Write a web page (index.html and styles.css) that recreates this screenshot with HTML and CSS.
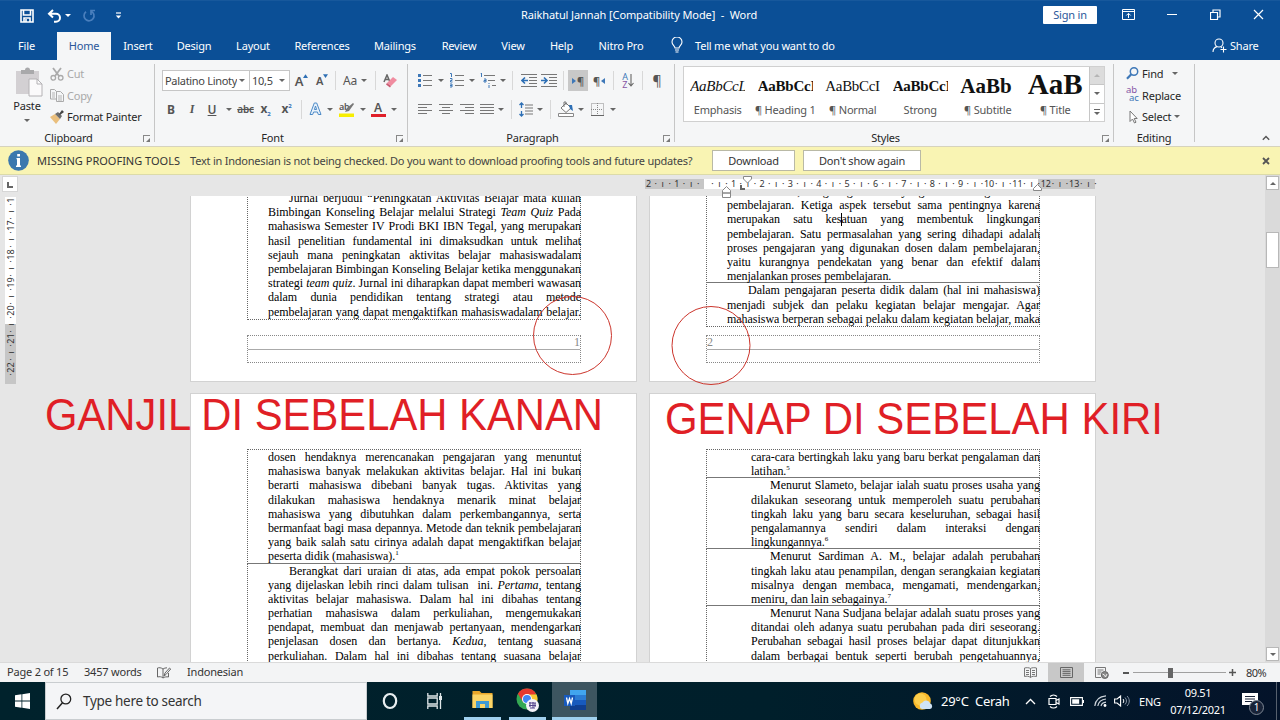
FILE: index.html
```html
<!DOCTYPE html>
<html lang="id">
<head>
    <meta charset="UTF-8">
    <meta name="viewport" content="width=device-width, initial-scale=1.0">
    <title>Raikhatul Jannah [Compatibility Mode] - Word</title>
    <link rel="stylesheet" href="styles.css">
</head>
<body>
    <header class="titlebar">
        <div class="quick-access">
            <svg width="14" height="14" viewBox="0 0 14 14"><path d="M1 1h12v12H1zM3.5 1v5h7V1M4 13V9h6v4M6 10v3" fill="none" stroke="#fff" stroke-width="1.6"/></svg>
            <svg class="undo" width="15" height="14" viewBox="0 0 15 14"><path d="M6 1L2 4.700L6 8.500M2 4.700H9a4 4 0 0 1 0 8H7" fill="none" stroke="#fff" stroke-width="2"/></svg>
            <i class="caret white"></i>
            <svg class="redo" width="14" height="14" viewBox="0 0 14 14"><path d="M9 2.200A5 5 0 1 1 4 2.800M9 6V1.500h4" fill="none" stroke="#4a7fbd" stroke-width="1.700"/></svg>
            <svg class="customize" width="7" height="8" viewBox="0 0 7 8"><path d="M1 1h5" stroke="#fff" stroke-width="1.200"/><path d="M.8 3.500h5.400L3.500 6.600z" fill="#fff"/></svg>
        </div>
        <h1 class="doc-title">Raikhatul Jannah [Compatibility Mode] &nbsp;-&nbsp; Word</h1>
        <div class="window-buttons">
            <button class="sign-in">Sign in</button>
            <svg width="13" height="11" viewBox="0 0 13 11"><path d="M.5.5h12v10H.5zM.5 2.500h12M6.500 9V4.500M4.300 6.500l2.200-2.200 2.200 2.200" fill="none" stroke="#fff"/></svg>
            <svg width="10" height="11" viewBox="0 0 10 11"><path d="M0 5.500h10" stroke="#fff"/></svg>
            <svg width="11" height="11" viewBox="0 0 11 11"><path d="M.5 3.500h7v7h-7zM3 3V1h7v7H8" fill="none" stroke="#fff" stroke-width="1.200"/></svg>
            <svg width="11" height="11" viewBox="0 0 11 11"><path d="M1 1l9 9M10 1l-9 9" stroke="#fff" stroke-width="1.200"/></svg>
        </div>
    </header>

    <nav class="tabs">
        <a class="tab file">File</a>
        <a class="tab active">Home</a>
        <a class="tab">Insert</a>
        <a class="tab">Design</a>
        <a class="tab">Layout</a>
        <a class="tab">References</a>
        <a class="tab">Mailings</a>
        <a class="tab">Review</a>
        <a class="tab">View</a>
        <a class="tab">Help</a>
        <a class="tab">Nitro Pro</a>
        <div class="tell-me">
            <svg width="12" height="16" viewBox="0 0 12 16"><path d="M4 11c0-2-3-3-3-6a5 5 0 0 1 10 0c0 3-3 4-3 6zM4 13h4M4.500 15h3" fill="none" stroke="#fff" stroke-width="1.100"/></svg>
            <span>Tell me what you want to do</span>
        </div>
        <div class="share">
            <svg width="15" height="15" viewBox="0 0 15 15"><circle cx="7" cy="5" r="4" fill="none" stroke="#fff" stroke-width="1.100"/><path d="M1 14c0-3 2-4.800 4-5.400M9 9l1 .8M11.500 8.500v6M8.500 11.500h6" fill="none" stroke="#fff" stroke-width="1.100"/></svg>
            <span>Share</span>
        </div>
    </nav>

    <section class="ribbon">
        <div class="group clipboard">
            <div class="group-body">
                <div class="paste">
                    <svg width="28" height="30" viewBox="0 0 28 30"><path d="M1 4h23v23H1z" fill="#d3d0d3"/><path d="M6 3h4a2.500 2.500 0 0 1 5 0h4v4H6z" fill="#a9a9ab"/><path d="M14 12h8l5 5v12H14z" fill="#fbfafb" stroke="#b4b2b5"/><path d="M22 12v5h5" fill="none" stroke="#b4b2b5"/></svg>
                    <span>Paste</span>
                    <i class="caret"></i>
                </div>
                <ul class="commands">
                    <li class="off"><svg width="14" height="14" viewBox="0 0 14 14"><path d="M3 1l6 8M11 1L5 9" stroke="#aaa" stroke-width="1.800"/><circle cx="3.300" cy="10.800" r="2.300" fill="none" stroke="#aaa" stroke-width="1.300"/><circle cx="10.700" cy="10.800" r="2.300" fill="none" stroke="#aaa" stroke-width="1.300"/></svg>Cut</li>
                    <li class="off"><svg width="14" height="14" viewBox="0 0 14 14"><path d="M.5 1.500h4l2 2V11h-6zM6.500 3.500h4l3 3v7h-7z" fill="#f5f6f7" stroke="#aaa"/><path d="M2 5h3M2 7h3M2 9h3M8 8h4M8 10h4M8 12h4" stroke="#b5b5b5"/></svg>Copy</li>
                    <li><svg width="14" height="14" viewBox="0 0 14 14"><path d="M0 7l5-3 5 5-4 5z" fill="#eabf7d"/><path d="M5 4l3-2 4 4-2 3z" fill="#6d6d6d"/><path d="M9 4l3-4 2 2-4 3z" fill="#444"/></svg>Format Painter</li>
                </ul>
            </div>
            <footer class="group-label"><span>Clipboard</span><i class="launcher"></i></footer>
        </div>

        <div class="group font">
            <div class="group-body">
                <div class="row font-top">
                    <div class="combo"><span class="combo-text">Palatino Linoty</span><i class="caret"></i></div>
                    <div class="combo size"><span class="combo-text">10,5</span><i class="caret"></i></div>
                    <span class="grow">A<svg width="5" height="4" viewBox="0 0 4 3"><path d="M0 3l2-3 2 3z" fill="#2d6fb5"/></svg></span>
                    <span class="grow small">A<svg width="5" height="4" viewBox="0 0 4 3"><path d="M0 0l2 3 2-3z" fill="#2d6fb5"/></svg></span>
                    <i class="sep"></i>
                    <span class="glyph-aa">Aa</span>
                    <i class="caret"></i>
                    <i class="sep"></i>
                    <svg width="14" height="14" viewBox="0 0 14 14"><path d="M1 8L4 1l3 7M2 5.500h4" fill="none" stroke="#666" stroke-width="1.500"/><path d="M4 9l6-6 4 3-6 6z" fill="#f08ca0"/><path d="M4 9l4 3-1 1.500-4-3z" fill="#c95a72"/></svg>
                </div>
                <div class="row font-bottom">
                    <b>B</b>
                    <span class="italic">I</span>
                    <span class="underline">U</span>
                    <i class="caret"></i>
                    <span class="strike">abc</span>
                    <span class="script">x<sub>2</sub></span>
                    <span class="script">x<sup>2</sup></span>
                    <i class="sep"></i>
                    <svg width="13" height="14" viewBox="0 0 13 14"><path d="M1 12.500L5.300 1h2.400L12 12.500H9.300L8.400 10H4.600L3.700 12.500zM5.400 7.500h2.200L6.500 4z" fill="#e9f2fb" stroke="#4c8ac7"/></svg>
                    <i class="caret"></i>
                    <span class="highlight">ab<svg width="15" height="15" viewBox="0 0 15 15"><path d="M0 11.500h15V15H0z" fill="#f7ee00"/><path d="M6 10l2-4 6-5 1 1-5 7z" fill="#777"/></svg></span>
                    <i class="caret"></i>
                    <span class="font-color">A</span>
                    <i class="caret"></i>
                </div>
            </div>
            <footer class="group-label"><span>Font</span><i class="launcher"></i></footer>
        </div>

        <div class="group paragraph">
            <div class="group-body">
                <div class="row para-top">
                    <svg width="14" height="15" viewBox="0 0 14 15"><path d="M5 2.500h9M5 7.500h9M5 12.500h9" stroke="#777"/><path d="M0 1h3v3H0zM0 6h3v3H0zM0 11h3v3H0z" fill="#3e78b8"/></svg>
                    <i class="caret"></i>
                    <svg width="14" height="15" viewBox="0 0 14 15"><path d="M5 2.500h9M5 7.500h9M5 12.500h9" stroke="#777"/><path d="M0 .500h1.500v3.500M0 5.500h2v2H.500v1.500h2M0 11h2v3H0M0 12.500h2" fill="none" stroke="#3e78b8"/></svg>
                    <i class="caret"></i>
                    <svg width="16" height="15" viewBox="0 0 16 15"><path d="M4 2.500h11M8 7.500h7M12 12.500h4" stroke="#777"/><path d="M.5 0h1v4M4 6h2v3H4V7.500h2M9 10v1M9 12v3" fill="none" stroke="#3e78b8"/></svg>
                    <i class="caret"></i>
                    <i class="sep"></i>
                    <svg width="16" height="13" viewBox="0 0 16 13"><path d="M0 .5h16M8 3.500h8M8 6.500h8M8 9.500h8M0 12.500h16" stroke="#777"/><path d="M7 6.500H1M4 3.500l-3 3 3 3" fill="none" stroke="#2d6fb5" stroke-width="1.600"/></svg>
                    <svg width="16" height="13" viewBox="0 0 16 13"><path d="M0 .5h16M8 3.500h8M8 6.500h8M8 9.500h8M0 12.500h16" stroke="#777"/><path d="M0 6.500h6M3 3.500l3 3-3 3" fill="none" stroke="#2d6fb5" stroke-width="1.600"/></svg>
                    <i class="sep"></i>
                    <span class="direction pressed"><svg width="4" height="6" viewBox="0 0 4 6"><path d="M0 0l4 3-4 3z" fill="#3e78b8"/></svg>¶</span>
                    <span class="direction">¶<svg width="4" height="6" viewBox="0 0 4 6"><path d="M4 0L0 3l4 3z" fill="#3e78b8"/></svg></span>
                    <i class="sep"></i>
                    <span class="sort"><span class="sort-letters"><em>A</em><em class="z">Z</em></span><svg width="6" height="13" viewBox="0 0 6 13"><path d="M3 0v12M.500 9L3 12l2.500-3" fill="none" stroke="#666" stroke-width="1.100"/></svg></span>
                    <i class="sep"></i>
                    <span class="pilcrow">¶</span>
                </div>
                <div class="row para-bottom">
                    <svg width="14" height="11" viewBox="0 0 14 11"><path d="M0 .5h14M0 3.500h9M0 6.500h14M0 9.500h9" stroke="#777"/></svg>
                    <svg width="14" height="11" viewBox="0 0 14 11"><path d="M0 .5h14M3 3.500h8M0 6.500h14M3 9.500h8" stroke="#777"/></svg>
                    <svg width="14" height="11" viewBox="0 0 14 11"><path d="M0 .5h14M5 3.500h9M0 6.500h14M5 9.500h9" stroke="#777"/></svg>
                    <svg width="14" height="11" viewBox="0 0 14 11"><path d="M0 .5h14M0 3.500h14M0 6.500h14M0 9.500h14" stroke="#777"/></svg>
                    <i class="caret"></i>
                    <i class="sep"></i>
                    <svg width="14" height="15" viewBox="0 0 14 15"><path d="M6 3h8M6 6h8M6 9h8M6 12h8" stroke="#777"/><path d="M2.500 1v5M.500 3l2-2 2 2M2.500 9v5M.500 12l2 2 2-2" fill="none" stroke="#2d6fb5" stroke-width="1.300"/></svg>
                    <i class="caret"></i>
                    <i class="sep"></i>
                    <svg width="16" height="16" viewBox="0 0 16 16"><path d="M.5 12.500h15v3H.5z" fill="#fff" stroke="#888"/><path d="M3 7l5-5 5 5-5 4.500zM6 6V1h2v3" fill="#fff" stroke="#777"/><path d="M11 4h3l1 6-3-2z" fill="#2d6fb5"/></svg>
                    <i class="caret"></i>
                    <svg width="13" height="13" viewBox="0 0 13 13"><path d="M.5.5h12v12H.5zM6.500 0v12M0 6.500h12" fill="none" stroke="#888" stroke-dasharray="1 1"/><path d="M0 12.500h13" stroke="#666"/></svg>
                    <i class="caret"></i>
                </div>
            </div>
            <footer class="group-label"><span>Paragraph</span><i class="launcher"></i></footer>
        </div>

        <div class="group styles">
            <div class="gallery">
                <div class="style-item"><span class="preview emphasis">AaBbCcL</span><span>Emphasis</span></div>
                <div class="style-item"><span class="preview heading">AaBbCcI</span><span>¶ Heading 1</span></div>
                <div class="style-item"><span class="preview">AaBbCcI</span><span>¶ Normal</span></div>
                <div class="style-item"><span class="preview heading">AaBbCcI</span><span>Strong</span></div>
                <div class="style-item"><span class="preview subtitle">AaBb</span><span>¶ Subtitle</span></div>
                <div class="style-item"><span class="preview title">AaB</span><span>¶ Title</span></div>
                <div class="gallery-scroll">
                    <span class="dim"><i class="caret up"></i></span>
                    <span><i class="caret"></i></span>
                    <span class="more"><i class="caret"></i></span>
                </div>
            </div>
            <footer class="group-label"><span>Styles</span><i class="launcher"></i></footer>
        </div>

        <div class="group editing">
            <div class="group-body">
                <ul class="commands">
                    <li><svg width="13" height="13" viewBox="0 0 13 13"><circle cx="8" cy="4.500" r="3.700" fill="none" stroke="#3e78b8" stroke-width="1.500"/><path d="M5.300 7.300L1 11.800" stroke="#3e78b8" stroke-width="2.200"/></svg>Find<i class="caret far"></i></li>
                    <li><span class="replace-icon"><em>ab</em><em>ac</em></span>Replace</li>
                    <li><svg width="13" height="14" viewBox="0 0 13 14"><path d="M4 1v10.500L6.500 9l2 4 1.500-.8L8.200 8.500h3z" fill="#fff" stroke="#777"/></svg>Select<i class="caret"></i></li>
                </ul>
            </div>
            <footer class="group-label"><span>Editing</span></footer>
        </div>
        <div class="collapse"><svg width="8" height="6" viewBox="0 0 8 6"><path d="M.8 4.800L4 1.500l3.200 3.300" fill="none" stroke="#555" stroke-width="1.400"/></svg></div>
    </section>

    <section class="message-bar">
        <svg width="21" height="21" viewBox="0 0 21 21"><circle cx="10.500" cy="10.500" r="10.300" fill="#3b78ae"/><path d="M9.200 4h2.800v2.600H9.200zM8.500 8h3.500v7.500h1v1.500h-5v-1.500h1V9.300h-.5z" fill="#fff"/></svg>
        <strong>MISSING PROOFING TOOLS</strong>
        <span class="message-text">Text in Indonesian is not being checked. Do you want to download proofing tools and future updates?</span>
        <button class="download">Download</button>
        <button class="dismiss">Don't show again</button>
        <svg class="close" width="8" height="8" viewBox="0 0 8 8"><path d="M1 1l6 6M7 1L1 7" stroke="#555" stroke-width="1.800"/></svg>
    </section>

    <main class="workspace">
        <div class="tab-selector"><i></i></div>
        <div class="ruler-strip">
            <div class="ruler">
                <span>2</span><span>·</span><span>ı</span><span>·</span>
                <span>1</span><span>·</span><span>ı</span><span>·</span>
                <span></span><span>·</span><span>ı</span><span>·</span>
                <span>1</span><span>·</span><span>ı</span><span>·</span>
                <span>2</span><span>·</span><span>ı</span><span>·</span>
                <span>3</span><span>·</span><span>ı</span><span>·</span>
                <span>4</span><span>·</span><span>ı</span><span>·</span>
                <span>5</span><span>·</span><span>ı</span><span>·</span>
                <span>6</span><span>·</span><span>ı</span><span>·</span>
                <span>7</span><span>·</span><span>ı</span><span>·</span>
                <span>8</span><span>·</span><span>ı</span><span>·</span>
                <span>9</span><span>·</span><span>ı</span><span>·</span>
                <span>10</span><span>·</span><span>ı</span><span>·</span>
                <span>11</span><span>·</span><span>ı</span><span>·</span>
                <span>12</span><span>·</span><span>ı</span><span>·</span>
                <span>13</span><span>·</span><span>ı</span><span>·</span>
                <svg class="marker hanging" width="9" height="12" viewBox="0 0 9 12"><path d="M.5 7V4.500l4-4 4 4V7zM.5 7h8v4.500h-8z" fill="#fff" stroke="#888"/></svg>
                <svg class="marker tabstop" width="5" height="5" viewBox="0 0 5 5"><path d="M1 0v4h4" fill="none" stroke="#666" stroke-width="2"/></svg>
                <svg class="marker first-line" width="9" height="8" viewBox="0 0 9 8"><path d="M.5.500h8v2.500l-4 4-4-4z" fill="#fff" stroke="#888"/></svg>
                <svg class="marker right" width="9" height="7" viewBox="0 0 9 7"><path d="M.5 6.500v-2l4-4 4 4v2z" fill="#fff" stroke="#888"/></svg>
            </div>
        </div>
        <div class="scrollbar">
            <span class="scroll-button"><i class="caret up"></i></span>
            <span class="thumb"></span>
            <span class="scroll-button"><i class="caret"></i></span>
        </div>
        <div class="side-ruler">
            <span>16</span><span>·</span><span>ı</span><span>·</span>
            <span>17</span><span>·</span><span>ı</span><span>·</span>
            <span>18</span><span>·</span><span>ı</span><span>·</span>
            <span>19</span><span>·</span><span>ı</span><span>·</span>
            <span>20</span><span>·</span><span>ı</span><span>·</span>
            <span>21</span><span>·</span><span>ı</span><span>·</span>
            <span>22</span><span>·</span>
        </div>
        <div class="pages">
            <article class="page odd-top">
                <div class="cell">
                    <p class="indent">Jurnal berjudul “Peningkatan Aktivitas Belajar mata kuliah</p>
                    <p>Bimbingan Konseling Belajar melalui Strategi <em>Team Quiz</em> Pada</p>
                    <p>mahasiswa Semester IV Prodi BKI IBN Tegal, yang merupakan</p>
                    <p>hasil penelitian fundamental ini dimaksudkan untuk melihat</p>
                    <p>sejauh mana peningkatan aktivitas belajar mahasiswadalam</p>
                    <p>pembelajaran Bimbingan Konseling Belajar ketika menggunakan</p>
                    <p>strategi <em>team quiz</em>. Jurnal ini diharapkan dapat memberi wawasan</p>
                    <p>dalam dunia pendidikan tentang strategi atau metode</p>
                    <p>pembelajaran yang dapat mengaktifkan mahasiswadalam belajar.</p>
                </div>
                <div class="page-footer"><span>1</span><span></span></div>
            </article>
            <article class="page even-top">
                <div class="cell">
                    <p>adalah media, lingkungan dan yang serta dengan bahan</p>
                    <p>pembelajaran. Ketiga aspek tersebut sama pentingnya karena</p>
                    <p>merupakan satu kes<i class="cursor"></i>atuan yang membentuk lingkungan</p>
                    <p>pembelajaran. Satu permasalahan yang sering dihadapi adalah</p>
                    <p>proses pengajaran yang digunakan dosen dalam pembelajaran,</p>
                    <p>yaitu kurangnya pendekatan yang benar dan efektif dalam</p>
                    <p class="last">menjalankan proses pembelajaran.</p>
                </div>
                <div class="cell">
                    <p class="indent">Dalam pengajaran peserta didik dalam (hal ini mahasiswa)</p>
                    <p>menjadi subjek dan pelaku kegiatan belajar mengajar. Agar</p>
                    <p>mahasiswa berperan sebagai pelaku dalam kegiatan belajar, maka</p>
                </div>
                <div class="page-footer left"><span>2</span><span></span></div>
            </article>
            <article class="page odd-bottom">
                <div class="cell">
                    <p>dosen hendaknya merencanakan pengajaran yang menuntut</p>
                    <p>mahasiswa banyak melakukan aktivitas belajar. Hal ini bukan</p>
                    <p>berarti mahasiswa dibebani banyak tugas. Aktivitas yang</p>
                    <p>dilakukan mahasiswa hendaknya menarik minat belajar</p>
                    <p>mahasiswa yang dibutuhkan dalam perkembangannya, serta</p>
                    <p class="tight">bermanfaat bagi masa depannya. Metode dan teknik pembelajaran</p>
                    <p>yang baik salah satu cirinya adalah dapat mengaktifkan belajar</p>
                    <p class="last">peserta didik (mahasiswa).<sup>1</sup></p>
                </div>
                <div class="cell">
                    <p class="indent">Berangkat dari uraian di atas, ada empat pokok persoalan</p>
                    <p>yang dijelaskan lebih rinci dalam tulisan &nbsp;ini. <em>Pertama</em>, tentang</p>
                    <p>aktivitas belajar mahasiswa. Dalam hal ini dibahas tentang</p>
                    <p>perhatian mahasiswa dalam perkuliahan, mengemukakan</p>
                    <p>pendapat, membuat dan menjawab pertanyaan, mendengarkan</p>
                    <p>penjelasan dosen dan bertanya. <em>Kedua</em>, tentang suasana</p>
                    <p>perkuliahan. Dalam hal ini dibahas tentang suasana belajar</p>
                </div>
            </article>
            <article class="page even-bottom">
                <div class="cell">
                    <p>cara-cara bertingkah laku yang baru berkat pengalaman dan</p>
                    <p class="last">latihan.<sup>5</sup></p>
                </div>
                <div class="cell">
                    <p class="indent">Menurut Slameto, belajar ialah suatu proses usaha yang</p>
                    <p>dilakukan seseorang untuk memperoleh suatu perubahan</p>
                    <p>tingkah laku yang baru secara keseluruhan, sebagai hasil</p>
                    <p>pengalamannya sendiri dalam interaksi dengan</p>
                    <p class="last">lingkungannya.<sup>6</sup></p>
                </div>
                <div class="cell">
                    <p class="indent">Menurut Sardiman A. M., belajar adalah perubahan</p>
                    <p>tingkah laku atau penampilan, dengan serangkaian kegiatan</p>
                    <p>misalnya dengan membaca, mengamati, mendengarkan,</p>
                    <p class="last">meniru, dan lain sebagainya.<sup>7</sup></p>
                </div>
                <div class="cell">
                    <p class="indent">Menurut Nana Sudjana belajar adalah suatu proses yang</p>
                    <p>ditandai oleh adanya suatu perubahan pada diri seseorang.</p>
                    <p>Perubahan sebagai hasil proses belajar dapat ditunjukkan</p>
                    <p>dalam berbagai bentuk seperti berubah pengetahuannya,</p>
                </div>
            </article>
        </div>
    </main>

    <section class="status-bar">
        <span class="page-count">Page 2 of 15</span>
        <span class="word-count">3457 words</span>
        <svg class="proof" width="14" height="12" viewBox="0 0 14 12"><path d="M6 2C4 .5 2 .5.500 1v9c2-.5 4-.5 5.500 1zM6 2c1-.8 2.500-1.200 4-1.200M6 11c1.500-1 3.500-1.500 5.500-1V6M7 9l1-3 4.500-5 1.200 1L9 7.500z" fill="none" stroke="#666"/></svg>
        <span>Indonesian</span>
        <div class="views">
            <span><svg width="13" height="11" viewBox="0 0 13 11"><path d="M6.500 1.500C5 .5 2.500.500.500 1v8.500c2-.5 4.500-.5 6 1 1.500-1.500 4-1.500 6-1V1c-2-.5-4.500-.5-6 .5zv9M2 3.500h3M2 5.500h3M2 7.500h3M8 3.500h3M8 5.500h3M8 7.500h3" fill="none" stroke="#777"/></svg></span>
            <span class="current"><svg width="13" height="11" viewBox="0 0 13 11"><path d="M.5.500h12v10H.500zM2.500 2.800h8M2.500 4.600h8M2.500 6.400h8M2.500 8.300h8" fill="none" stroke="#666"/></svg></span>
            <span><svg width="14" height="12" viewBox="0 0 14 12"><path d="M6 10.500H.500V.500h10V4M2.500 3h6M2.500 5h4M2.500 7h3" fill="none" stroke="#777"/><circle cx="9.800" cy="8" r="3.500" fill="#888" stroke="#666"/><path d="M7.500 7l2 1 1 2 1.500-3" fill="none" stroke="#eee"/></svg></span>
        </div>
        <div class="zoom">
            <i class="minus"></i>
            <div class="slider"><i></i></div>
            <svg width="7" height="7" viewBox="0 0 7 7"><path d="M0 3.500h7M3.500 0v7" stroke="#555" stroke-width="1.500"/></svg>
            <span>80%</span>
        </div>
    </section>

    <footer class="taskbar">
        <div class="start"><svg width="15" height="16" viewBox="0 0 15 16"><path d="M0 2.300l6.500-1v6.300H0zM7.300 1.200L15 0v7.600H7.300zM0 8.400h6.500v6.300l-6.500-1zM7.300 8.400H15V16l-7.700-1.200z" fill="#fff"/></svg></div>
        <div class="search">
            <svg width="16" height="17" viewBox="0 0 16 17"><circle cx="9.800" cy="6" r="4.900" fill="none" stroke="#222" stroke-width="1.300"/><path d="M6.500 9.800L1 16" stroke="#222" stroke-width="1.500"/></svg>
            <span>Type here to search</span>
        </div>
        <div class="apps">
            <span><svg width="16" height="18" viewBox="0 0 16 18"><ellipse cx="8" cy="9" rx="6.200" ry="7" fill="none" stroke="#e8eef0" stroke-width="2.200"/></svg></span>
            <span><svg width="16" height="18" viewBox="0 0 16 18"><path d="M.8 1v3h9.400V1M.8 17v-3h9.400v3M.800 6h9.400v6H.8zM13.500 1v16" fill="none" stroke="#dfe6e8" stroke-width="1.300"/><path d="M12 4h3v4h-3z" fill="#dfe6e8"/></svg></span>
            <span class="open"><svg width="21" height="19" viewBox="0 0 21 19"><path d="M.5 1h7l2 2h11v15H.5z" fill="#e9a72a"/><path d="M.5 4.500h20V18H.5z" fill="#fbd567"/><path d="M4 18v-7h13v7h-4v-4H8v4z" fill="#3f9bd5"/></svg></span>
            <span class="open"><svg width="24" height="26" viewBox="0 0 24 26"><circle cx="11" cy="12" r="10.500" fill="#34a853"/><path d="M11 12L1.900 6.700A10.500 10.500 0 0 1 20.100 6.700z" fill="#e6392f"/><path d="M11 7.500h9.500A10.500 10.500 0 0 1 11 22.500l4-8z" fill="#fcc934"/><path d="M1.900 6.700L7 15l4-4V6z" fill="#e6392f"/><circle cx="11" cy="12" r="5" fill="#fff"/><circle cx="11" cy="12" r="4" fill="#4285f4"/><circle cx="16.500" cy="18.500" r="6.500" fill="#f4f2f8"/><path d="M13 16h7M13 18.500h7M14 21h5M14 15v5M17 15v6M19 16v4" stroke="#55458c" stroke-width="1.100"/></svg></span>
            <span class="open focused"><svg width="22" height="20" viewBox="0 0 22 20"><path d="M6 0h16v5H6z" fill="#41a5ee"/><path d="M6 5h16v5H6z" fill="#2b7cd3"/><path d="M6 10h16v5H6z" fill="#185abd"/><path d="M6 15h16v5H6z" fill="#103f91"/><path d="M0 5h11v11H0z" fill="#185abd"/><path d="M2.500 7.500l1.300 6 1.700-5 1.700 5 1.300-6" fill="none" stroke="#fff" stroke-width="1.300"/></svg></span>
        </div>
        <div class="tray">
            <svg class="weather" width="20" height="19" viewBox="0 0 20 19"><circle cx="9" cy="9" r="8.800" fill="#f8b829"/><circle cx="7.500" cy="7.500" r="6" fill="#fcce4d"/><path d="M9 17a3.300 3.300 0 0 1 .5-6.400 4.200 4.200 0 0 1 7.700 1A2.800 2.800 0 0 1 17 17z" fill="#cfe3f5"/></svg>
            <span class="temp">29°C&nbsp; Cerah</span>
            <svg class="tray-up" width="11" height="7" viewBox="0 0 11 7"><path d="M1 6l4.500-4.500L10 6" fill="none" stroke="#fff" stroke-width="1.300"/></svg>
            <svg class="meet" width="12" height="15" viewBox="0 0 12 15"><path d="M1 4.500h7v6H1zM8 6.500l3-1.500v5L8 8.500M2 2.500c2-2 5-2 7 0M2 12.500c2 2 5 2 7 0" fill="none" stroke="#fff" stroke-width="1.200"/></svg>
            <svg class="battery" width="14" height="9" viewBox="0 0 14 9"><path d="M.6.600h11.800v7.800H.6z" fill="none" stroke="#fff" stroke-width="1.100"/><path d="M2.200 2.200h7v4.600h-7zM13 3h1v3h-1z" fill="#fff"/></svg>
            <svg class="wifi" width="13" height="12" viewBox="0 0 13 12"><path d="M.8 11C1.500 5 5.500 1.300 12 .8M3.800 11C4.500 7 7 4.500 12 4M7 11c.5-2 2.500-3.500 5-3.800" fill="none" stroke="#ccd3da" stroke-width="1.200"/><circle cx="11" cy="10.500" r="1.400" fill="#fff"/></svg>
            <svg class="volume" width="16" height="12" viewBox="0 0 16 12"><path d="M.6 4h2.500l3.500-3v10L3.100 8H.6z" fill="none" stroke="#fff" stroke-width="1.100"/><path d="M9 4c1 1 1 3 0 4" fill="none" stroke="#fff"/><path d="M11 2.500c2 2 2 5 0 7M13 1c3 3 3 7 0 10" fill="none" stroke="#8894a4"/></svg>
            <span class="lang">ENG</span>
            <div class="clock"><span>09.51</span><span>07/12/2021</span></div>
            <div class="notify">
                <svg width="16" height="16" viewBox="0 0 16 16"><path d="M0 0h16v12h-5l-3 4v-4H0z" fill="#fff"/><path d="M3 3.500h10M3 6h10M3 8.500h7" stroke="#182338"/></svg>
                <span>1</span>
            </div>
        </div>
    </footer>

    <svg class="annotations" width="1280" height="720" viewBox="0 0 1280 720">
        <circle cx="572.500" cy="335.500" r="39"/>
        <circle cx="711" cy="345.500" r="39"/>
        <text x="45" y="429.500" textLength="558" lengthAdjust="spacingAndGlyphs">GANJIL DI SEBELAH KANAN</text>
        <text x="665" y="433.500" textLength="498" lengthAdjust="spacingAndGlyphs">GENAP DI SEBELAH KIRI</text>
    </svg>
</body>
</html>
```
FILE: styles.css
```css
* {
    margin: 0;
    padding: 0;
    box-sizing: border-box;
}

body {
    width: 1280px;
    height: 720px;
    overflow: hidden;
    display: flex;
    flex-direction: column;
    position: relative;
    font-family: 'Noto Sans', 'Open Sans', sans-serif;
    font-size: 11px;
    letter-spacing: -0.2px;
    color: #262626;
    background: #e6e6e6;
}

svg {
    display: block;
    flex: none;
}

button {
    font: inherit;
    letter-spacing: inherit;
}

em {
    font-style: italic;
}

/* small drop-down triangle */
.caret {
    display: block;
    flex: none;
    width: 0;
    height: 0;
    border: 3px solid transparent;
    border-top: 3px solid #666;
    border-bottom: 0;
}

.caret.up {
    border-top: 0;
    border-bottom: 3px solid #666;
}

.caret.white {
    border-top-color: #fff;
}

/* title bar */
.titlebar {
    height: 30px;
    flex: none;
    background: #0b4f96;
    border-top: 1px solid #17589c;
    display: grid;
    grid-template-columns: 438px 402px 1fr;
    align-items: center;
    color: #fff;
}

.quick-access {
    display: flex;
    align-items: center;
    padding-left: 20px;
}

.undo {
    margin: 0 3px 0 13px;
}

.redo {
    margin-left: 11px;
}

.customize {
    margin-left: 19px;
}

.doc-title {
    font-size: 11px;
    font-weight: 400;
    letter-spacing: -0.1px;
    line-height: 15px;
    padding-bottom: 2px;
    text-align: center;
    white-space: pre;
}

.window-buttons {
    display: flex;
    align-items: center;
    justify-content: flex-end;
    gap: 32.5px;
    padding: 0 16px 2px 0;
}

.sign-in {
    width: 54px;
    height: 18px;
    border: 0;
    border-radius: 1px;
    background: #fff;
    color: #2b579a;
    margin-right: -8px;
}

/* tabs */
.tabs {
    height: 30px;
    flex: none;
    background: #0b4f96;
    color: #fff;
    display: grid;
    grid-template-columns: 57px 54px 54px 58px 60px 78px 68px 60px 48px 49px 70px 1fr 67px;
    padding-top: 2px;
}

.tab {
    display: flex;
    align-items: center;
    justify-content: center;
    height: 28px;
    padding-bottom: 2px;
}

.tab.file {
    padding-right: 4px;
}

.tab.active {
    background: #f5f6f7;
    color: #2b579a;
}

.tell-me,
.share {
    display: flex;
    align-items: center;
    gap: 12px;
    padding-bottom: 2px;
}

.tell-me {
    padding-left: 15px;
}

.share {
    gap: 3px;
    margin-left: -1px;
}

/* ribbon */
.ribbon {
    height: 87px;
    flex: none;
    display: flex;
    background: #f5f6f7;
    border-bottom: 1px solid #d6d3bd;
    padding: 4px 0;
}

.group {
    display: flex;
    flex-direction: column;
    justify-content: space-between;
    border-right: 1px solid #c6c6c6;
    height: 78px;
}

.group.clipboard {
    width: 155px;
}

.group.font {
    width: 253px;
}

.group.paragraph {
    width: 267px;
}

.group.styles {
    width: 439px;
}

.group.editing {
    width: 81px;
}

.group-label {
    height: 8px;
    line-height: 8px;
    display: flex;
    align-items: center;
    justify-content: center;
    position: relative;
    padding-right: 17px;
}

.editing .group-label {
    padding-right: 0;
}

.launcher {
    position: absolute;
    right: 4px;
    top: 1px;
    width: 7px;
    height: 7px;
    border-top: 1px solid #888;
    border-left: 1px solid #888;
}

.launcher::after {
    content: '';
    position: absolute;
    right: 0;
    bottom: 0;
    width: 0;
    height: 0;
    border-left: 4px solid transparent;
    border-bottom: 4px solid #777;
}

.clipboard .group-body {
    display: flex;
    gap: 8px;
    padding-left: 12px;
}

.paste {
    width: 30px;
    padding-top: 3px;
    display: flex;
    flex-direction: column;
    align-items: center;
    gap: 1px;
}

.paste svg {
    margin-left: 3px;
}

.paste .caret {
    margin-top: 5px;
}

.commands {
    list-style: none;
    margin-top: -1px;
}

.commands li {
    height: 21.5px;
    display: flex;
    align-items: center;
    gap: 3px;
    white-space: nowrap;
}

.commands .off {
    color: #a9a9a9;
}

.row {
    display: grid;
    align-items: center;
    justify-items: center;
    color: #555;
}

.sep {
    width: 1px;
    height: 19px;
    background: #d8d8d8;
}

.font .group-body {
    padding: 5px 0 0 5px;
}

.font-top {
    height: 23px;
    padding-left: 2px;
    grid-template-columns: 88px 40px 23px 18px 8px 22px 6px 16px 14px;
}

.font-bottom {
    height: 30px;
    padding-top: 4px;
    grid-template-columns: 22px 20px 20px 14px 19px 21px 21px 8px 20px 9px 25px 7px 24px 8px;
    font-size: 12px;
}

.combo {
    width: 100%;
    height: 21px;
    background: #fff;
    border: 1px solid #c6c6c6;
    display: flex;
    align-items: center;
    justify-content: space-between;
    padding: 0 4px 0 2px;
    color: #444;
}

.combo.size {
    border-left: 0;
}

.combo-text {
    width: 72px;
    overflow: hidden;
    white-space: nowrap;
    letter-spacing: -0.3px;
}

.size .combo-text {
    width: auto;
}

.grow {
    display: flex;
    align-items: flex-start;
    font-size: 13px;
    line-height: 14px;
    font-weight: 600;
}

.grow.small {
    font-size: 11px;
}

.glyph-aa {
    font-size: 12px;
}

.italic {
    font-family: 'Liberation Serif', serif;
    font-style: italic;
    font-weight: 700;
}

.underline {
    text-decoration: underline;
    font-weight: 600;
}

.strike {
    text-decoration: line-through;
    font-size: 10px;
    font-weight: 600;
}

.script {
    font-weight: 700;
    line-height: 14px;
    white-space: nowrap;
}

.script sub,
.script sup {
    font-size: 6px;
    line-height: 0;
    color: #2d6fb5;
}

.highlight {
    position: relative;
    width: 15px;
    height: 15px;
    font-size: 9px;
    line-height: 9px;
    font-weight: 600;
}

.highlight svg {
    position: absolute;
    left: 0;
    top: 0;
}

.font-color {
    width: 15px;
    height: 15px;
    border-bottom: 3px solid #e0202a;
    font-weight: 600;
    font-size: 12px;
    line-height: 11px;
    text-align: center;
}

.paragraph .group-body {
    padding: 5px 0 0 6px;
}

.para-top {
    height: 23px;
    grid-template-columns: 22px 10px 22px 8px 24px 6px 13px 19px 22px 7px 22px 20px 9px 20px 8px 22px;
}

.para-bottom {
    height: 30px;
    padding-top: 4px;
    grid-template-columns: 22px 20px 21px 20px 8px 12px 18px 10px 10px 22px 8px 24px 8px;
}

.direction {
    display: flex;
    align-items: center;
    justify-content: center;
    gap: 1px;
    width: 20px;
    height: 21px;
    font-weight: 600;
}

.pressed {
    background: #c8c8c8;
}

.sort {
    display: flex;
    align-items: center;
}

.sort-letters em {
    display: block;
    font-style: normal;
    font-size: 9px;
    line-height: 8px;
    color: #3e78b8;
}

.sort-letters .z {
    color: #8655a5;
}

.pilcrow {
    font-size: 14px;
    line-height: 16px;
}

/* style gallery */
.gallery {
    margin: 2px 0 0 8px;
    width: 422px;
    height: 56px;
    background: #fff;
    border: 1px solid #d0d0d0;
    display: grid;
    grid-template-columns: repeat(6, 67.5px) 1fr;
    color: #555;
}

.style-item {
    display: flex;
    flex-direction: column;
    align-items: center;
    padding: 5px 0 0;
    white-space: nowrap;
}

.preview {
    height: 30px;
    line-height: 28px;
    width: 55px;
    overflow: hidden;
    font-family: 'Liberation Serif', serif;
    font-size: 15px;
    letter-spacing: -0.3px;
    color: #111;
}

.preview.emphasis {
    font-style: italic;
}

.preview.heading {
    font-weight: 700;
    font-size: 15px;
    letter-spacing: -0.25px;
}

.preview.subtitle {
    font-weight: 600;
    font-size: 21px;
    letter-spacing: 0;
}

.preview.title {
    font-weight: 700;
    font-size: 29px;
    line-height: 24px;
    letter-spacing: 0;
}

.gallery-scroll {
    display: flex;
    flex-direction: column;
    border-left: 1px solid #c6c6c6;
}

.gallery-scroll span {
    flex: 1;
    display: flex;
    flex-direction: column;
    align-items: center;
    justify-content: center;
    border-top: 1px solid #c6c6c6;
}

.gallery-scroll .dim {
    background: #dcdcdc;
    border-top: 0;
}

.dim .caret {
    border-bottom-color: #b5b5b5;
}

.more::before {
    content: '';
    width: 6px;
    height: 1px;
    margin-bottom: 2px;
    background: #666;
}

.editing .group-body {
    padding-left: 12px;
}

.editing .far {
    margin-left: 6px;
}

.replace-icon {
    width: 13px;
    font-size: 9.5px;
    line-height: 8px;
    padding-bottom: 2px;
}

.replace-icon em {
    display: block;
    font-style: normal;
    color: #8655a5;
}

.replace-icon em + em {
    color: #3e78b8;
    padding-left: 3px;
}

.collapse {
    flex: 1;
    display: flex;
    align-items: flex-end;
    justify-content: flex-end;
    padding: 0 10px 1px 0;
}

/* yellow message bar */
.message-bar {
    height: 28px;
    flex: none;
    display: flex;
    align-items: center;
    background: #f9f4b3;
    border-bottom: 1px solid #dcdba8;
    padding: 0 10px 0 8px;
    color: #444;
}

.message-bar strong {
    margin: 0 10px 0 8px;
    font-weight: 400;
    color: #333;
    width: 143px;
    white-space: nowrap;
    letter-spacing: 0;
}

.message-text {
    width: 522px;
    white-space: nowrap;
    letter-spacing: -0.22px;
}

.message-bar button {
    height: 21px;
    background: #fff;
    border: 1px solid #b9b9a6;
    color: #333;
}

.download {
    width: 83px;
}

.dismiss {
    width: 118px;
    margin-left: 8px;
}

.close {
    margin-left: auto;
}

/* workspace */
.workspace {
    flex: 1;
    min-height: 0;
    display: grid;
    grid-template-columns: 22px 1fr 15px;
    grid-template-rows: 21px 1fr;
    background: #e6e6e6;
}

.tab-selector {
    width: 16px;
    height: 16px;
    margin: 1px 0 0 2px;
    background: #fff;
    border: 1px solid #d6d6d6;
}

.tab-selector i {
    display: block;
    width: 6px;
    height: 6px;
    margin: 5px 0 0 4px;
    border-left: 2px solid #666;
    border-bottom: 2px solid #666;
}

.ruler {
    position: relative;
    display: flex;
    width: 450px;
    height: 10px;
    margin: 4px 0 0 623px;
    font-size: 9px;
    line-height: 10px;
    color: #333;
    background: linear-gradient(90deg, #c6c6c6 59px, #fff 59px, #fff 393px, #c6c6c6 393px);
}

.ruler span {
    width: 7.1px;
    flex: none;
    display: flex;
    justify-content: center;
    letter-spacing: 0;
}

.marker {
    position: absolute;
}

.hanging {
    left: 77px;
    top: 7px;
}

.tabstop {
    left: 95px;
    top: 6px;
}

.first-line {
    left: 98px;
    top: -3px;
}

.right {
    left: 388px;
    top: 5px;
}

.scrollbar {
    grid-column: 3;
    grid-row: 1 / 3;
    background: #dadada;
    display: flex;
    flex-direction: column;
    align-items: center;
    padding: 1px 0;
}

.scroll-button {
    width: 13px;
    height: 14px;
    background: #fff;
    border: 1px solid #b8b8b8;
    display: flex;
    align-items: center;
    justify-content: center;
}

.thumb {
    width: 13px;
    height: 36px;
    margin: 42px 0 auto;
    background: #fff;
    border: 1px solid #b8b8b8;
}

.side-ruler {
    grid-column: 1;
    grid-row: 2;
    width: 11px;
    height: 187px;
    margin: 1px 0 0 5px;
    overflow: hidden;
    font-size: 9px;
    line-height: 7px;
    color: #333;
    background: linear-gradient(#fff 127px, #c6c6c6 127px);
    display: flex;
    flex-direction: column;
}

.side-ruler span {
    height: 7.07px;
    flex: none;
    display: flex;
    justify-content: center;
    letter-spacing: 0;
    transform: rotate(-90deg);
}

.side-ruler span:first-child {
    margin-top: -3px;
}

.pages {
    grid-column: 2;
    grid-row: 2;
    min-height: 0;
    overflow: hidden;
    display: grid;
    grid-template-columns: 447px 447px;
    grid-template-rows: 186px 271px;
    gap: 11px 12px;
    padding-left: 168px;
}

.page {
    background: #fff;
    border: 1px solid #d2d2d2;
    overflow: hidden;
    padding-left: 56px;
    font-family: 'Liberation Serif', serif;
    font-size: 12px;
    line-height: 14.2px;
    letter-spacing: -0.04px;
    color: #000;
}

.odd-top,
.even-top {
    border-top: 0;
}

.cell {
    width: 334px;
    border: 1px dotted #666;
    border-bottom: 0;
    padding-left: 20px;
}

.cell p {
    height: 14.2px;
    margin-right: -1px;
    white-space: nowrap;
    text-align: justify;
    text-align-last: justify;
}

.cell + .cell {
    border-top: 1px solid #777;
    margin-top: -1px;
}

.cell .indent {
    padding-left: 21px;
}

.cell .tight {
    letter-spacing: -0.14px;
}

.cell .last {
    text-align-last: left;
}

.cell sup {
    font-size: 7px;
    line-height: 0;
}

.odd-top .cell {
    margin-top: -6px;
    border-bottom: 1px dotted #666;
}

.even-top .cell:first-child {
    margin-top: -13px;
}

.even-top .cell:nth-child(2) {
    border-bottom: 1px dotted #666;
}

.odd-bottom,
.even-bottom {
    padding-top: 55px;
}

.even-bottom .cell {
    padding-left: 44px;
}

.even-bottom .cell .indent {
    padding-left: 19px;
}

.cursor {
    display: inline-block;
    width: 1px;
    height: 13px;
    margin: -2px -1px -3px 0;
    background: #000;
}

.page-footer {
    width: 334px;
    height: 28px;
    margin-top: 15px;
    border: 1px dotted #888;
    color: #888;
    text-align: right;
}

.page-footer.left {
    text-align: left;
    margin-top: 8px;
}

.page-footer span {
    display: block;
    height: 13px;
    line-height: 13px;
}

.page-footer span:first-child {
    height: 14px;
    border-bottom: 1px solid #aaa;
}

/* status bar */
.status-bar {
    height: 20px;
    flex: none;
    display: flex;
    align-items: center;
    padding: 0 13px 0 7px;
    background: #f3f4f5;
    border-top: 1px solid #dadada;
    line-height: 14px;
    color: #333;
}

.status-bar > span {
    padding-bottom: 2px;
}

.page-count {
    width: 77px;
}

.word-count {
    width: 73px;
}

.proof {
    margin-right: 16px;
}

.views {
    margin-left: auto;
    display: flex;
    align-self: stretch;
}

.views span {
    width: 36px;
    display: flex;
    align-items: center;
    justify-content: center;
}

.views .current {
    background: #c8c8c8;
}

.zoom {
    display: flex;
    align-items: center;
    padding: 0 1px 0 3px;
}

.zoom span {
    width: 20px;
    margin-left: 10px;
    letter-spacing: -0.6px;
}

.minus {
    width: 6px;
    height: 2px;
    background: #555;
}

.slider {
    width: 93px;
    height: 1px;
    margin: 0 3px 0 4px;
    background: #a0a0a0;
    display: flex;
    align-items: center;
}

.slider i {
    width: 5px;
    height: 10px;
    flex: none;
    margin-left: 35px;
    background: #666;
}

/* taskbar */
.taskbar {
    height: 38px;
    flex: none;
    display: flex;
    background: linear-gradient(90deg, #00222c, #001f2b 60%, #04132a);
    color: #fff;
}

.start {
    width: 45px;
    display: flex;
    align-items: center;
    justify-content: center;
}

.search {
    width: 322px;
    background: #f4f5f7;
    border: 1px solid #c9cdd0;
    display: flex;
    align-items: center;
    gap: 11px;
    padding-left: 10px;
    font-size: 13.5px;
    letter-spacing: -0.3px;
    color: #333;
}

.apps {
    display: flex;
}

.apps span {
    width: 45px;
    display: flex;
    align-items: center;
    justify-content: center;
}

.apps .open {
    width: 37px;
    margin: 0 4px;
    border-bottom: 3px solid #9fd0ee;
}

.apps span:nth-child(2) {
    margin-right: 3px;
}

.apps .open.focused {
    width: 45px;
    margin: 0 0 0 2px;
    background: #3d5560;
}

.tray {
    margin-left: auto;
    display: flex;
    align-items: center;
    border-right: 1px solid #56606e;
    margin-right: 3px;
}

.temp {
    width: 92px;
    padding-left: 8px;
    font-size: 13px;
    letter-spacing: -0.25px;
    white-space: nowrap;
}

.meet {
    margin-left: 12px;
}

.battery {
    margin-left: 10px;
}

.wifi {
    margin-left: 10px;
}

.volume {
    margin-left: 7px;
}

.lang {
    width: 22px;
    margin-left: 9px;
    font-size: 11px;
}

.clock {
    width: 60px;
    margin-left: 7px;
    display: flex;
    flex-direction: column;
    align-items: center;
    line-height: 17px;
    letter-spacing: -0.3px;
}

.notify {
    position: relative;
    margin: 0 18px 0 14px;
}

.notify span {
    position: absolute;
    left: 7px;
    top: 7px;
    width: 15px;
    height: 15px;
    border: 1px solid #7e8794;
    border-radius: 50%;
    background: #182338;
    font-size: 10px;
    line-height: 13px;
    text-align: center;
}

/* red marks drawn over the window */
.annotations {
    position: absolute;
    left: 0;
    top: 0;
    pointer-events: none;
    letter-spacing: 0;
}

.annotations circle {
    fill: none;
    stroke: #cc352c;
    stroke-width: 1;
}

.annotations text {
    font-family: 'Liberation Sans', sans-serif;
    font-size: 43.5px;
    fill: #e01f26;
}
```
